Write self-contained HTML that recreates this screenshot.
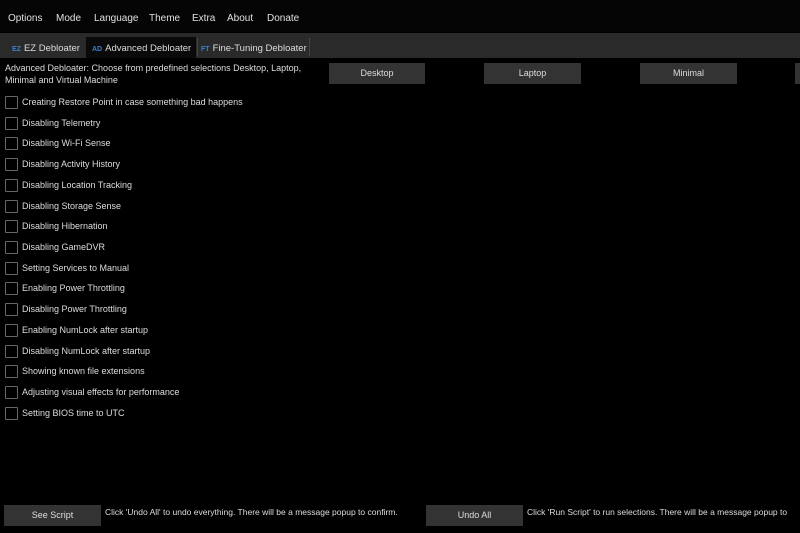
<!DOCTYPE html>
<html><head><meta charset="utf-8"><style>
body{margin:0;width:800px;height:533px;background:#000;overflow:hidden;font-family:"Liberation Sans",sans-serif;color:#ddd;position:relative}
.menu{position:absolute;top:0;left:0;width:800px;height:32px;background:#050505}
.menu span{position:absolute;top:13px;font-size:10px;color:#e0e0e0}
.tabs{position:absolute;top:33px;left:0;width:800px;height:25px;background:#2a2a2a}
.tab{position:absolute;top:5px;font-size:9.5px;color:#ddd}
.tab b{color:#3a7fd0;font-size:7px;font-weight:bold;margin-right:3px}
.act{position:absolute;left:86px;top:37px;width:110px;height:21px;background:#0a0a0a}
.desc{position:absolute;left:5px;top:62px;font-size:9px;line-height:12px;color:#ddd}
.btn{position:absolute;height:21px;background:#333;color:#ddd;font-size:9px;text-align:center;line-height:21px}
.cb{position:absolute;left:5px;width:11px;height:11px;border:1px solid #666;border-radius:1px}
.lb{position:absolute;left:22px;font-size:9px;color:#ddd}
.note{position:absolute;top:507px;font-size:8.5px;color:#ddd}
</style></head><body>
<div class="menu">
<span style="left:8px">Options</span><span style="left:56px">Mode</span><span style="left:94px">Language</span><span style="left:149px">Theme</span><span style="left:192px">Extra</span><span style="left:227px">About</span><span style="left:267px">Donate</span>
</div>
<div class="tabs"></div>
<div class="act"></div>
<div style="position:absolute;left:197px;top:38px;width:1px;height:18px;background:#444"></div>
<div style="position:absolute;left:309px;top:38px;width:1px;height:18px;background:#444"></div>
<div class="tab" style="left:12px;top:43px"><b>EZ</b>EZ Debloater</div>
<div class="tab" style="left:92px;top:43px"><b>AD</b>Advanced Debloater</div>
<div class="tab" style="left:201px;top:43px"><b>FT</b>Fine-Tuning Debloater</div>
<div class="desc">Advanced Debloater: Choose from predefined selections Desktop, Laptop,<br>Minimal and Virtual Machine</div>
<div class="btn" style="left:329px;top:63px;width:96px">Desktop</div>
<div class="btn" style="left:484px;top:63px;width:97px">Laptop</div>
<div class="btn" style="left:640px;top:63px;width:97px">Minimal</div>
<div class="btn" style="left:795px;top:63px;width:10px"></div>
<div class="cb" style="top:96px"></div><div class="lb" style="top:97px">Creating Restore Point in case something bad happens</div>
<div class="cb" style="top:117px"></div><div class="lb" style="top:118px">Disabling Telemetry</div>
<div class="cb" style="top:137px"></div><div class="lb" style="top:138px">Disabling Wi-Fi Sense</div>
<div class="cb" style="top:158px"></div><div class="lb" style="top:159px">Disabling Activity History</div>
<div class="cb" style="top:179px"></div><div class="lb" style="top:180px">Disabling Location Tracking</div>
<div class="cb" style="top:200px"></div><div class="lb" style="top:201px">Disabling Storage Sense</div>
<div class="cb" style="top:220px"></div><div class="lb" style="top:221px">Disabling Hibernation</div>
<div class="cb" style="top:241px"></div><div class="lb" style="top:242px">Disabling GameDVR</div>
<div class="cb" style="top:262px"></div><div class="lb" style="top:263px">Setting Services to Manual</div>
<div class="cb" style="top:282px"></div><div class="lb" style="top:283px">Enabling Power Throttling</div>
<div class="cb" style="top:303px"></div><div class="lb" style="top:304px">Disabling Power Throttling</div>
<div class="cb" style="top:324px"></div><div class="lb" style="top:325px">Enabling NumLock after startup</div>
<div class="cb" style="top:345px"></div><div class="lb" style="top:346px">Disabling NumLock after startup</div>
<div class="cb" style="top:365px"></div><div class="lb" style="top:366px">Showing known file extensions</div>
<div class="cb" style="top:386px"></div><div class="lb" style="top:387px">Adjusting visual effects for performance</div>
<div class="cb" style="top:407px"></div><div class="lb" style="top:408px">Setting BIOS time to UTC</div>
<div class="btn" style="left:4px;top:505px;width:97px">See Script</div>
<div class="note" style="left:105px">Click 'Undo All' to undo everything. There will be a message popup to confirm.</div>
<div class="btn" style="left:426px;top:505px;width:97px">Undo All</div>
<div class="note" style="left:527px;white-space:nowrap">Click 'Run Script' to run selections. There will be a message popup to</div>
</body></html>
